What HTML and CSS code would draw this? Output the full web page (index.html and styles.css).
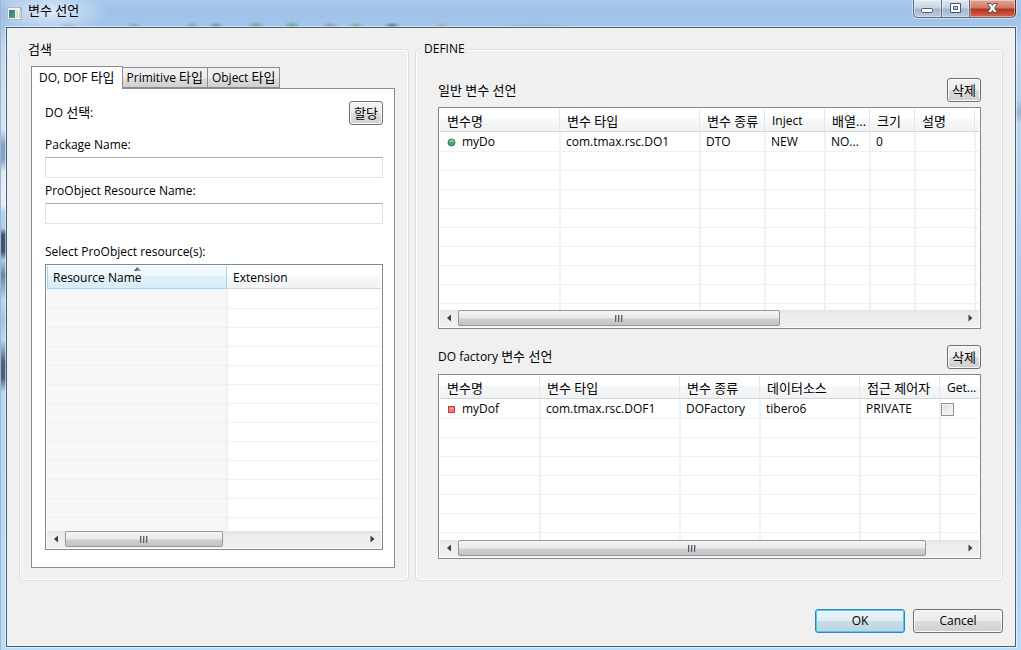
FILE: index.html
```html
<!DOCTYPE html>
<html lang="ko">
<head>
<meta charset="utf-8">
<title>변수 선언</title>
<link rel="stylesheet" href="styles.css">
</head>
<body>
<div class="window">
  <header class="titlebar">
    <svg class="app-icon" width="15" height="13" viewBox="0 0 15 13" aria-hidden="true">
      <defs><linearGradient id="pane" x1="0" y1="0" x2="1" y2="1"><stop offset="0" stop-color="#3c6ea0"/><stop offset="1" stop-color="#4caa6c"/></linearGradient></defs>
      <rect x="0.500" y="0.500" width="14" height="12" fill="#f4f4f2" stroke="#b4b6b8"/>
      <rect x="2" y="3" width="6" height="8" fill="url(#pane)"/>
      <rect x="9" y="3" width="2" height="8" fill="#dcdedd"/>
      <rect x="12" y="3" width="2" height="8" fill="#d2d4d2"/>
      <rect x="13" y="1" width="1" height="2" fill="#8fb7a4"/>
    </svg>
    <h1 class="title ko">변수 선언</h1>
    <div class="window-buttons">
      <button class="win-btn" type="button" aria-label="최소화"><svg width="13" height="13" viewBox="0 0 13 13"><rect x="0.500" y="6.500" width="11" height="4" rx="1" fill="#fff" stroke="#535666"/></svg></button>
      <button class="win-btn" type="button" aria-label="최대화"><svg width="13" height="13" viewBox="0 0 13 13"><path fill="#fff" stroke="#535666" fill-rule="evenodd" d="M1.500 1.500h10v9h-10zM4.500 4.500h4v3h-4z"/></svg></button>
      <button class="win-btn win-close" type="button" aria-label="닫기"><svg width="13" height="13" viewBox="0 0 13 13"><path fill="#fff" stroke="#535666" d="M1.500 1.500h3.500l1.500 2 1.500-2h3.500l-3 4.500 3 4.500H8L6.500 8.500 5 10.500H1.500l3-4.500z"/></svg></button>
    </div>
  </header>

  <main class="client">
    <div class="groups">
      <fieldset class="group search">
        <legend class="ko">검색</legend>
        <div class="tabs" role="tablist">
          <button class="tab selected" type="button" role="tab" aria-selected="true">DO, DOF <span class="ko">타입</span></button>
          <button class="tab" type="button" role="tab" aria-selected="false">Primitive <span class="ko">타입</span></button>
          <button class="tab" type="button" role="tab" aria-selected="false">Object <span class="ko">타입</span></button>
        </div>
        <div class="tab-panel" role="tabpanel">
          <div class="heading"><span>DO <span class="ko">선택</span>:</span><button class="btn ko" type="button">할당</button></div>
          <label class="label first" for="package">Package Name:</label>
          <input class="field" id="package" type="text">
          <label class="label" for="resource">ProObject Resource Name:</label>
          <input class="field" id="resource" type="text">
          <div class="label list-label" id="list-label">Select ProObject resource(s):</div>
          <div class="grid-box">
            <div class="grid-view">
              <table class="grid sorted" aria-labelledby="list-label">
                <colgroup><col class="w180"><col></colgroup>
                <thead><tr><th aria-sort="ascending">Resource Name<svg class="sort" width="7" height="4" viewBox="0 0 7 4" aria-hidden="true"><path d="M0 4L3.500 0 7 4z" fill="#5f9dbd"/><path d="M0 4L3.500 0v2L2 4z" fill="#2f5f7c"/></svg></th><th>Extension</th></tr></thead>
                <tbody>
                  <tr><td></td><td></td></tr><tr><td></td><td></td></tr><tr><td></td><td></td></tr>
                  <tr><td></td><td></td></tr><tr><td></td><td></td></tr><tr><td></td><td></td></tr>
                  <tr><td></td><td></td></tr><tr><td></td><td></td></tr><tr><td></td><td></td></tr>
                  <tr><td></td><td></td></tr><tr><td></td><td></td></tr><tr><td></td><td></td></tr>
                  <tr><td></td><td></td></tr>
                </tbody>
              </table>
            </div>
            <div class="scrollbar">
              <button class="arrow" type="button" aria-label="왼쪽으로"><svg width="5" height="8" viewBox="0 0 5 8"><path d="M4 0.500v7L0 4z" fill="#3c3f45"/></svg></button>
              <div class="track"><div class="thumb thumb-list"><i class="grip"></i></div></div>
              <button class="arrow" type="button" aria-label="오른쪽으로"><svg width="5" height="8" viewBox="0 0 5 8"><path d="M0.500 0.500v7L4.500 4z" fill="#3c3f45"/></svg></button>
            </div>
          </div>
        </div>
      </fieldset>

      <fieldset class="group define">
        <legend>DEFINE</legend>
        <div class="heading"><span class="ko" id="vars-label">일반 변수 선언</span><button class="btn ko" type="button">삭제</button></div>
        <div class="grid-box vars">
          <div class="grid-view">
            <table class="grid" aria-labelledby="vars-label">
              <colgroup><col class="w120"><col class="w140"><col class="w65"><col class="w60"><col class="w45"><col class="w45"><col class="w60"><col></colgroup>
              <thead><tr><th class="ko">변수명</th><th class="ko">변수 타입</th><th class="ko">변수 종류</th><th>Inject</th><th class="ko">배열...</th><th class="ko">크기</th><th class="ko">설명</th><th></th></tr></thead>
              <tbody>
                <tr><td><span class="item"><svg width="9" height="9" viewBox="0 0 9 9" aria-hidden="true"><circle cx="4.500" cy="4.500" r="3.500" fill="#4fa36b" stroke="#2c7f4c"/><path d="M2 4a2.500 2.500 0 0 1 5 0z" fill="#8dc79b"/></svg>myDo</span></td><td>com.tmax.rsc.DO1</td><td>DTO</td><td>NEW</td><td>NO...</td><td>0</td><td></td><td></td></tr>
                <tr><td></td><td></td><td></td><td></td><td></td><td></td><td></td><td></td></tr>
                <tr><td></td><td></td><td></td><td></td><td></td><td></td><td></td><td></td></tr>
                <tr><td></td><td></td><td></td><td></td><td></td><td></td><td></td><td></td></tr>
                <tr><td></td><td></td><td></td><td></td><td></td><td></td><td></td><td></td></tr>
                <tr><td></td><td></td><td></td><td></td><td></td><td></td><td></td><td></td></tr>
                <tr><td></td><td></td><td></td><td></td><td></td><td></td><td></td><td></td></tr>
                <tr><td></td><td></td><td></td><td></td><td></td><td></td><td></td><td></td></tr>
                <tr><td></td><td></td><td></td><td></td><td></td><td></td><td></td><td></td></tr>
                <tr><td></td><td></td><td></td><td></td><td></td><td></td><td></td><td></td></tr>
              </tbody>
            </table>
          </div>
          <div class="scrollbar">
            <button class="arrow" type="button" aria-label="왼쪽으로"><svg width="5" height="8" viewBox="0 0 5 8"><path d="M4 0.500v7L0 4z" fill="#3c3f45"/></svg></button>
            <div class="track"><div class="thumb thumb-vars"><i class="grip"></i></div></div>
            <button class="arrow" type="button" aria-label="오른쪽으로"><svg width="5" height="8" viewBox="0 0 5 8"><path d="M0.500 0.500v7L4.500 4z" fill="#3c3f45"/></svg></button>
          </div>
        </div>

        <div class="heading second"><span id="factory-label">DO factory <span class="ko">변수 선언</span></span><button class="btn ko" type="button">삭제</button></div>
        <div class="grid-box factory">
          <div class="grid-view">
            <table class="grid" aria-labelledby="factory-label">
              <colgroup><col class="w100"><col class="w140"><col class="w80"><col class="w100"><col class="w80"><col></colgroup>
              <thead><tr><th class="ko">변수명</th><th class="ko">변수 타입</th><th class="ko">변수 종류</th><th class="ko">데이터소스</th><th class="ko">접근 제어자</th><th>Get...</th></tr></thead>
              <tbody>
                <tr><td><span class="item"><svg width="9" height="9" viewBox="0 0 9 9" aria-hidden="true"><rect x="1.500" y="1.500" width="6" height="6" fill="#f07f7c" stroke="#c5383f"/><path d="M3 3h3v1H3z" fill="#f7a9a6"/></svg>myDof</span></td><td>com.tmax.rsc.DOF1</td><td>DOFactory</td><td>tibero6</td><td>PRIVATE</td><td class="check-cell"><input class="check" type="checkbox" aria-label="Getter"></td></tr>
                <tr><td></td><td></td><td></td><td></td><td></td><td></td></tr>
                <tr><td></td><td></td><td></td><td></td><td></td><td></td></tr>
                <tr><td></td><td></td><td></td><td></td><td></td><td></td></tr>
                <tr><td></td><td></td><td></td><td></td><td></td><td></td></tr>
                <tr><td></td><td></td><td></td><td></td><td></td><td></td></tr>
                <tr><td></td><td></td><td></td><td></td><td></td><td></td></tr>
                <tr><td></td><td></td><td></td><td></td><td></td><td></td></tr>
              </tbody>
            </table>
          </div>
          <div class="scrollbar">
            <button class="arrow" type="button" aria-label="왼쪽으로"><svg width="5" height="8" viewBox="0 0 5 8"><path d="M4 0.500v7L0 4z" fill="#3c3f45"/></svg></button>
            <div class="track"><div class="thumb thumb-factory"><i class="grip"></i></div></div>
            <button class="arrow" type="button" aria-label="오른쪽으로"><svg width="5" height="8" viewBox="0 0 5 8"><path d="M0.500 0.500v7L4.500 4z" fill="#3c3f45"/></svg></button>
          </div>
        </div>
      </fieldset>
    </div>

    <footer class="actions">
      <button class="btn wide default" type="button">OK</button>
      <button class="btn wide" type="button">Cancel</button>
    </footer>
  </main>
</div>
</body>
</html>
```
FILE: styles.css
```css
* { box-sizing: border-box; }

body {
  margin: 0;
  color: #000;
  font: 12px/18px "Open Sans", "Noto Sans CJK KR", sans-serif;
}

button, input { font: inherit; color: inherit; margin: 0; }

.window {
  display: flex;
  flex-direction: column;
  min-height: 100vh;
  padding: 0 5px 3px 6px;
  background:
    linear-gradient(90deg, #a9b4bf 1px, transparent 1px),
    linear-gradient(180deg, transparent 27px, #c4dcf3 60px, #cfe5fa 130px, #7f9fc8 145px, #86a4cc 160px, #dcecfb 172px, #e4f1fd 205px, #b0d5fb 212px, #a9cff5 228px, #3a526e 235px, #3f5671 252px, #a8cef4 260px, #6484ab 275px, #b4d8fb 300px, #a2c4e6 320px, #b4d8fb 340px, #47617f 362px, #47617f 378px, #b4d8fb 392px, #b9dcfd 100%) left / 6px 100% no-repeat,
    linear-gradient(180deg, transparent 27px, #bed7f1 60px, #b3d1f0 100px, #98b1cd 112px, #b9d6f3 125px, #a3c4e8 400px, #b9dcfd 100%) right / 5px 100% no-repeat,
    linear-gradient(#a8c9ee, #9fc1e8 12px, #a5c6ec 27px, #b9dcfd 60px);
}

.titlebar {
  display: flex;
  align-items: flex-start;
  height: 27px;
  background:
    radial-gradient(ellipse 60px 20px at 44px 12px, #ffffffaa, transparent),
    radial-gradient(ellipse 9px 4px at 62px 26px, #8b9aa8aa, transparent),
    radial-gradient(ellipse 8px 4px at 128px 26px, #7d93b0aa, transparent),
    radial-gradient(ellipse 8px 4px at 186px 26px, #6b86a8aa, transparent),
    radial-gradient(ellipse 8px 4px at 210px 26px, #4d8f92cc, transparent),
    radial-gradient(ellipse 9px 5px at 250px 26px, #54a07dcc, transparent),
    radial-gradient(ellipse 9px 5px at 286px 26px, #54a07dcc, transparent),
    radial-gradient(ellipse 9px 4px at 324px 26px, #7f8c94cc, transparent),
    radial-gradient(ellipse 9px 4px at 350px 26px, #6fa48ccc, transparent),
    radial-gradient(ellipse 9px 4px at 386px 26px, #4a6078cc, transparent),
    radial-gradient(ellipse 9px 4px at 436px 26px, #a3a98ecc, transparent),
    radial-gradient(ellipse 40px 3px at 530px 26px, #8ba8c6aa, transparent);
}

.app-icon { margin: 7px 6px 0 1px; }
.title { flex: 1; margin: 4px 0 0; line-height: 18px; font-weight: 400; }

.window-buttons { display: flex; box-shadow: 0 0 0 1px #e1edf9aa; border-radius: 0 0 5px 5px; }
.win-btn {
  display: flex;
  justify-content: center;
  width: 28px;
  height: 18px;
  padding: 2px 0 0;
  border: 1px solid #5d6c80;
  border-top: 0;
  border-right: 0;
  background: linear-gradient(#dbe7f4, #c6d5e6 8px, #a2b5cc 9px, #b9cce1);
  box-shadow: inset 0 0 0 1px #ffffff66;
}
.win-btn:first-child { border-radius: 0 0 0 5px; }
.win-close {
  width: 47px;
  border-right: 1px solid #5b2b2b;
  border-radius: 0 0 5px 0;
  background: linear-gradient(#e0a497, #cf7865 8px, #b2321d 9px, #d4674a);
}

.client {
  flex: 1;
  display: flex;
  flex-direction: column;
  padding: 12px 12px 13px;
  border: 1px solid #4d5e73;
  background: #f0f0f0;
  box-shadow: 0 0 0 1px #ffffff88;
}

.groups { flex: 1; display: grid; grid-template-columns: 390fr 588fr; gap: 6px; }
.group {
  display: flex;
  flex-direction: column;
  min-width: 0;
  margin: 0;
  border: 1px solid #d5dfe5;
  border-radius: 4px;
  box-shadow: inset 0 0 0 1px #fff;
}
.group legend { padding: 0 3px; line-height: 18px; background: #f0f0f0; }
.search { padding: 8px 13px 12px 11px; }
.define { padding: 20px 21px 21px 22px; }
.define legend { margin-left: -17px; }
.search legend { margin-left: -6px; }

.ko { font-size: 13px; line-height: 1; }

.tabs { display: flex; align-items: flex-end; }
.tab {
  height: 21px;
  margin-right: -1px;
  padding: 0 4px;
  border: 1px solid #898c95;
  background: linear-gradient(#f2f2f2, #ebebeb 10px, #dddddd 11px, #cfcfcf);
}
.tab.selected {
  z-index: 1;
  height: 23px;
  margin-bottom: -1px;
  padding: 0 7px;
  border-bottom: 0;
  background: #fff;
}
.tab-panel {
  flex: 1;
  display: flex;
  flex-direction: column;
  padding: 12px 11px 17px 13px;
  border: 1px solid #898c95;
  background: #fff;
}

.heading { display: flex; align-items: center; justify-content: space-between; }
.btn {
  height: 24px;
  padding: 0 4px;
  border: 1px solid #707070;
  border-radius: 3px;
  background: linear-gradient(#f2f2f2, #ebebeb 50%, #dddddd 50%, #cfcfcf);
  box-shadow: inset 0 0 0 1px #fbfbfb;
}
.btn.wide { width: 90px; }
.btn.default {
  border-color: #3c7fb1;
  background: linear-gradient(#eef4f8, #dfebf1 50%, #c9dde7 50%, #bfd3de);
  box-shadow: inset 0 0 0 1px #3fd0f8;
}

.label { margin: 4px 0 3px; }
.label.first { margin-top: 11px; }
.list-label { margin: 19px 0 3px; }
.field {
  width: 100%;
  height: 21px;
  padding: 0 4px;
  border: 1px solid #e2e3ea;
  border-top-color: #abadb3;
  background: #fff;
}

.grid-box {
  flex: 1 1 0;
  display: flex;
  flex-direction: column;
  min-height: 0;
  padding: 1px;
  border: 1px solid #828790;
  background: #fff;
}
.define .grid-box { margin-top: 5px; }
.define .vars { flex-grow: 223; }
.define .factory { flex-grow: 185; }
.heading.second { margin-top: 16px; }
.grid-view { flex: 1 1 0; min-height: 0; overflow: hidden; }

.grid { width: 100%; table-layout: fixed; border-collapse: separate; border-spacing: 0; }
.grid th, .grid td {
  text-align: left;
  font-weight: 400;
  white-space: nowrap;
  overflow: hidden;
}
.grid th {
  height: 23px;
  padding: 1px 0 0 7px;
  line-height: 18px;
  border-right: 1px solid #e4e6e9;
  border-bottom: 1px solid #d5d5d5;
  background: linear-gradient(#fff 9px, #f7f8fa 10px, #f1f2f4);
}
.grid td {
  height: 19px;
  padding: 0 0 0 5px;
  line-height: 18px;
  border: 1px solid #edf1f8;
  border-width: 0 1px 1px;
  border-bottom-color: #f0f0f0;
}
.grid tr:first-child td { height: 20px; padding-top: 1px; }
.grid td:first-child { border-left: 0; padding-left: 6px; }
.grid th:last-child, .grid td:last-child { border-right: 0; }

.sorted th { padding-left: 6px; }
.sorted th:first-child {
  position: relative;
  padding-left: 5px;
  border: 1px solid #96d9f9;
  border-top: 0;
  background: linear-gradient(#f2f9fc 9px, #e1f1f9 10px, #d8ecf6);
}
.sorted td:first-child { background: #f7f7f7; }
.sort { position: absolute; top: 1px; left: 50%; margin-left: -3px; }

.w180 { width: 180px; }
.w140 { width: 140px; }
.w120 { width: 120px; }
.w100 { width: 100px; }
.w80 { width: 80px; }
.w65 { width: 65px; }
.w60 { width: 60px; }
.w45 { width: 45px; }

.item { display: flex; align-items: center; gap: 6px; padding-left: 1px; }
.grid .check-cell { padding-left: 0; }
.check {
  display: block;
  appearance: none;
  width: 13px;
  height: 13px;
  border: 1px solid #8e8f8f;
  background: linear-gradient(135deg, #dcdfe2, #f8f8f8);
  box-shadow: inset 0 0 0 1px #f4f4f4;
}

.scrollbar { display: flex; height: 17px; padding-bottom: 1px; background: linear-gradient(#e3e3e3, #ececec 4px, #f0f0f0); }
.arrow {
  display: flex;
  align-items: center;
  justify-content: center;
  width: 18px;
  padding: 0;
  border: 0;
  background: none;
}
.track { flex: 1; display: flex; }
.thumb {
  display: flex;
  align-items: center;
  justify-content: center;
  border: 1px solid #979797;
  border-radius: 2px;
  background: linear-gradient(#f5f5f5, #e9e9eb 7px, #d0d0d3 8px, #c2c2c6);
}
.thumb-list { width: 53%; }
.thumb-vars { width: 64%; }
.thumb-factory { width: 93%; }
.grip {
  width: 8px;
  height: 7px;
  background: repeating-linear-gradient(90deg, #5e6166 0 1px, #b4b4b8 1px 2px, transparent 2px 3px);
}

.actions { display: flex; justify-content: flex-end; gap: 8px; margin-top: 28px; }
```
